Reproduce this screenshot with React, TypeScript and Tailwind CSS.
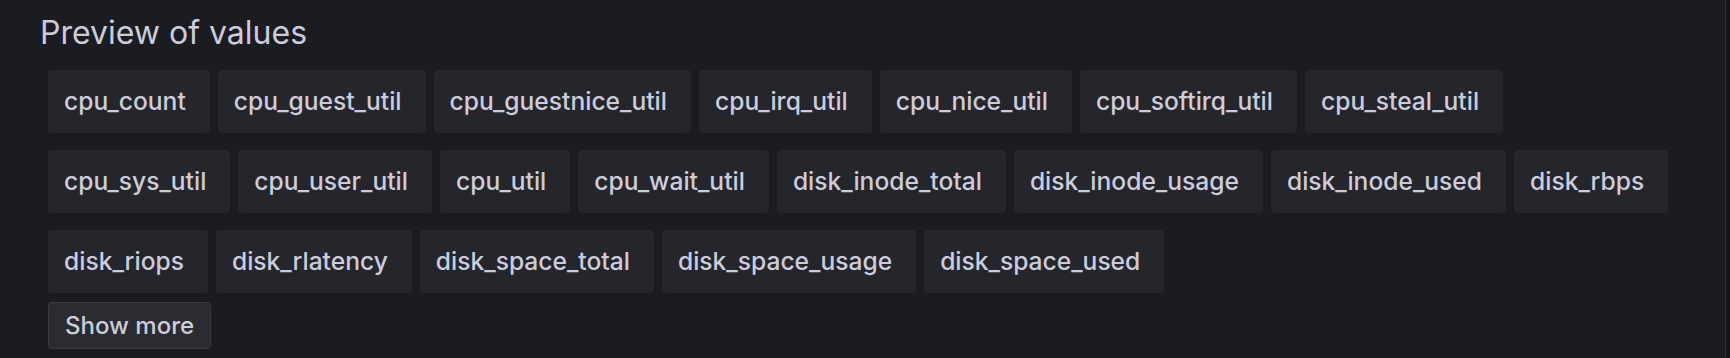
const rows: string[][] = [
  [
    "cpu_count",
    "cpu_guest_util",
    "cpu_guestnice_util",
    "cpu_irq_util",
    "cpu_nice_util",
    "cpu_softirq_util",
    "cpu_steal_util",
  ],
  [
    "cpu_sys_util",
    "cpu_user_util",
    "cpu_util",
    "cpu_wait_util",
    "disk_inode_total",
    "disk_inode_usage",
    "disk_inode_used",
    "disk_rbps",
  ],
  ["disk_riops", "disk_rlatency", "disk_space_total", "disk_space_usage", "disk_space_used"],
];

function Chip({ label }: { label: string }) {
  return (
    <span className="flex h-[63px] items-center rounded bg-[#25262b] pl-4 pr-6 text-[24.6px] font-medium text-[#ccccdc]">
      {label}
    </span>
  );
}

export default function App() {
  return (
    <div className="flex h-[358px] w-[1730px] bg-[#141519] font-['Inter',sans-serif]">
      <div className="h-full w-[1726px] border-r border-[#34353b] bg-[#1b1c21] pl-10 pt-[9px]">
        <h2 className="text-[32px] leading-[48px] font-normal text-[#ccccdc]">Preview of values</h2>
        <div className="mt-[13px] flex flex-col gap-[17px] pl-2">
          {rows.map((row, i) => (
            <div key={i} className="flex gap-2">
              {row.map((label) => (
                <Chip key={label} label={label} />
              ))}
            </div>
          ))}
        </div>
        <button
          type="button"
          className="mt-[9px] ml-2 flex h-[47px] items-center rounded border border-[#3a3b41] bg-[#2b2c31] px-4 text-[24px] font-medium text-[#ccccdc]"
        >
          Show more
        </button>
      </div>
    </div>
  );
}
